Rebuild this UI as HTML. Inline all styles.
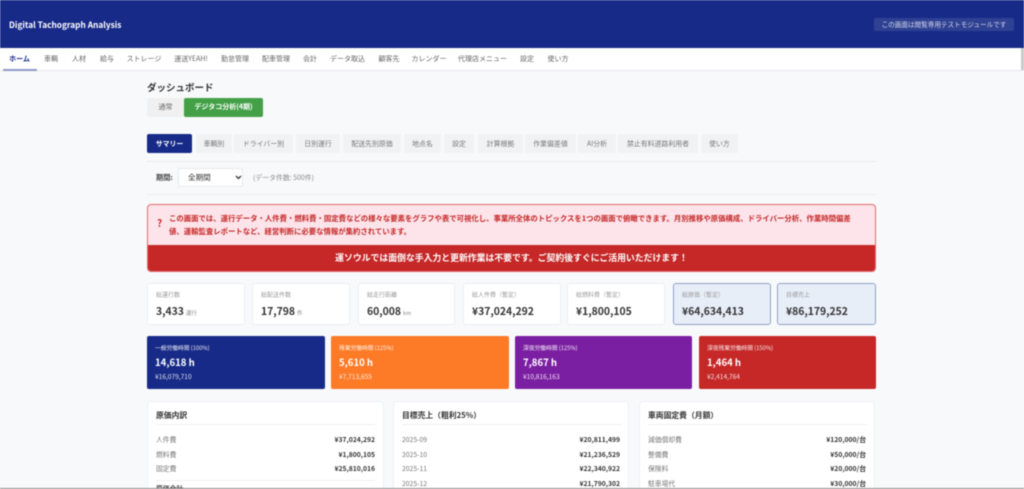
<!DOCTYPE html>
<html lang="ja"><head><meta charset="utf-8"><title>Digital Tachograph Analysis</title>
<style>
*{box-sizing:border-box;margin:0;padding:0}
html,body{width:1024px;height:489px;overflow:hidden;background:#f8f9fb}
body{font-family:"Noto Sans CJK JP","Liberation Sans",sans-serif;color:#333}
#w{position:relative;width:1024px;height:489px;overflow:hidden;filter:blur(.45px)}
#w div{position:absolute;white-space:nowrap}
.c{text-align:center}
.r{text-align:right}
.nav{top:48px;height:22px;line-height:22px;font-size:7px;color:#666;text-align:center}
.tab{top:134px;height:19px;line-height:19px;font-size:6.9px;color:#777;background:#f1f2f3;border-radius:2px;text-align:center}
.kpi{top:283px;height:42px;background:#fff;border:1px solid #eceef1;border-radius:3px}
.kpi.h{background:#e8eef8;border:1px solid #8fa3c8}
.kl{left:8px;top:5px;font-size:6px;line-height:11px;color:#9a9a9a}
.kv{left:8px;top:18px;font-size:10.4px;line-height:17px;font-weight:700;color:#333}
.kv span{font-size:5.5px;font-weight:400;color:#888;margin-left:2px}
.col{top:336px;height:53px;width:178px;border-radius:2px;color:#fff}
.cl{left:8px;top:7px;font-size:5.75px;line-height:10px;opacity:.9}
.cv{left:8px;top:17px;font-size:9.6px;line-height:18px;font-weight:700}
.cb{left:8px;top:35px;font-size:6.6px;line-height:11px;opacity:.85}
.p{top:401px;height:100px;background:#fff;border:1px solid #eef0f3;border-radius:4px}
.pt{top:8px;left:8px;font-size:7.8px;line-height:12px;font-weight:700;color:#333}
.pl{left:8px;height:1px;background:#eff0f2}
.k{left:8px;font-size:6.8px;line-height:11px;color:#777}
.v{right:8px;font-size:6.8px;line-height:11px;font-weight:700;color:#333}
</style></head><body><div id="w">
<div style="left:0;top:0;width:1024px;height:48px;background:#172a88"></div>
<div style="left:9px;top:18px;font-size:8.3px;line-height:14px;font-weight:700;color:#fff">Digital Tachograph Analysis</div>
<div class="c" style="left:874px;top:18px;width:140px;height:13px;line-height:13px;background:#2f4193;border-radius:2px;font-size:6.6px;color:#d5daec">この画面は閲覧専用テストモジュールです</div>

<div style="left:0;top:48px;width:1024px;height:23px;background:#fff;border-bottom:1px solid #e6e8eb"></div>
<div style="left:1021px;top:48px;width:3px;height:22px;background:#c9c9c9"></div>
<div style="left:3px;top:69px;width:34px;height:2px;background:#8f97c6"></div>
<div class="nav" style="left:5px;width:29px;color:#172a88;font-weight:700">ホーム</div>
<div class="nav" style="left:39px;width:24px">車輌</div>
<div class="nav" style="left:67px;width:24px">人材</div>
<div class="nav" style="left:95px;width:24px">給与</div>
<div class="nav" style="left:124px;width:40px">ストレージ</div>
<div class="nav" style="left:171px;width:40px">運送YEAH!</div>
<div class="nav" style="left:218px;width:34px">勤怠管理</div>
<div class="nav" style="left:259px;width:34px">配車管理</div>
<div class="nav" style="left:298px;width:24px">会計</div>
<div class="nav" style="left:327px;width:41px">データ取込</div>
<div class="nav" style="left:374px;width:30px">顧客先</div>
<div class="nav" style="left:409px;width:40px">カレンダー</div>
<div class="nav" style="left:456px;width:53px">代理店メニュー</div>
<div class="nav" style="left:515px;width:24px">設定</div>
<div class="nav" style="left:543px;width:30px">使い方</div>

<div style="left:147px;top:79px;font-size:9.5px;line-height:16px;font-weight:700;color:#333">ダッシュボード</div>
<div class="c" style="left:147px;top:98px;width:37px;height:19px;line-height:19px;background:#f0f0f0;border-radius:2px 0 0 2px;font-size:7px;color:#666">通常</div>
<div class="c" style="left:184px;top:98px;width:79px;height:19px;line-height:19px;background:#43a047;border-radius:2px;font-size:7px;color:#fff;font-weight:700">デジタコ分析(4期)</div>

<div class="tab" style="left:147px;width:45px;background:#172a88;color:#fff;font-weight:700">サマリー</div>
<div class="tab" style="left:196px;width:36px">車輌別</div>
<div class="tab" style="left:234px;width:59px">ドライバー別</div>
<div class="tab" style="left:296px;width:44px">日別運行</div>
<div class="tab" style="left:343px;width:58px">配送先別原価</div>
<div class="tab" style="left:404px;width:37px">地点名</div>
<div class="tab" style="left:444px;width:30px">設定</div>
<div class="tab" style="left:478px;width:45px">計算根拠</div>
<div class="tab" style="left:525px;width:51px">作業偏差値</div>
<div class="tab" style="left:578px;width:38px">AI分析</div>
<div class="tab" style="left:618px;width:80px">禁止有料道路利用者</div>
<div class="tab" style="left:701px;width:37px">使い方</div>
<div style="left:147px;top:161px;width:729px;height:1px;background:#e9ebee"></div>

<div style="left:156px;top:172px;font-size:7.2px;line-height:12px;font-weight:700;color:#444">期間:</div>
<div style="left:178px;top:168px;width:65px;height:19px;background:#fff;border:1px solid #e8e9ec;border-radius:2px"></div>
<div style="left:188px;top:171px;font-size:7.6px;line-height:13px;color:#333">全期間</div>
<svg style="position:absolute;left:235px;top:175px" width="7" height="5" viewBox="0 0 7 5"><path d="M1 1l2.5 2.5L6 1" fill="none" stroke="#333" stroke-width="1.3"/></svg>
<div style="left:253px;top:172px;font-size:6.9px;line-height:11px;color:#8b8b8b">(データ件数: 500件)</div>
<div style="left:147px;top:194px;width:729px;height:1px;background:#eceef0"></div>

<div style="left:147px;top:204px;width:729px;height:68px;background:#fce4ea;border:1px solid #e26a6a;border-radius:4px;overflow:hidden">
<div style="left:-1px;top:40px;width:731px;height:28px;background:#c62828"></div>
</div>
<div style="left:157px;top:216px;font-size:10px;line-height:14px;font-weight:700;color:#c62828">?</div>
<div style="left:169px;top:212px;font-size:7.39px;line-height:13px;font-weight:700;color:#c62828">この画面では、運行データ・人件費・燃料費・固定費などの様々な要素をグラフや表で可視化し、事業所全体のトピックスを1つの画面で俯瞰できます。月別推移や原価構成、ドライバー分析、作業時間偏差</div>
<div style="left:169px;top:225px;font-size:7.39px;line-height:13px;font-weight:700;color:#c62828">値、運輸監査レポートなど、経営判断に必要な情報が集約されています。</div>
<div class="c" style="left:147px;top:251px;width:729px;font-size:8.85px;line-height:14px;font-weight:700;color:#fff">運ソウルでは面倒な手入力と更新作業は不要です。ご契約後すぐにご活用いただけます！</div>

<div class="kpi" style="left:147px;width:98px"><div class="kl">総運行数</div><div class="kv">3,433<span>運行</span></div></div>
<div class="kpi" style="left:252px;width:98px"><div class="kl">総配送件数</div><div class="kv">17,798<span>件</span></div></div>
<div class="kpi" style="left:358px;width:97px"><div class="kl">総走行距離</div><div class="kv">60,008<span>km</span></div></div>
<div class="kpi" style="left:463px;width:98px"><div class="kl">総人件費（暫定）</div><div class="kv">¥37,024,292</div></div>
<div class="kpi" style="left:567px;width:98px"><div class="kl">総燃料費（暫定）</div><div class="kv">¥1,800,105</div></div>
<div class="kpi h" style="left:673px;width:98px"><div class="kl">総原価（暫定）</div><div class="kv">¥64,634,413</div></div>
<div class="kpi h" style="left:777px;width:99px"><div class="kl">目標売上</div><div class="kv">¥86,179,252</div></div>

<div class="col" style="left:147px;background:#172a88"><div class="cl">一般労働時間 (100%)</div><div class="cv">14,618 h</div><div class="cb">¥16,079,710</div></div>
<div class="col" style="left:331px;background:#fd7a26"><div class="cl">残業労働時間 (125%)</div><div class="cv">5,610 h</div><div class="cb">¥7,713,655</div></div>
<div class="col" style="left:515px;width:177px;background:#7b1fa2"><div class="cl">深夜労働時間 (125%)</div><div class="cv">7,867 h</div><div class="cb">¥10,816,163</div></div>
<div class="col" style="left:699px;width:177px;background:#c62828"><div class="cl">深夜残業労働時間 (150%)</div><div class="cv">1,464 h</div><div class="cb">¥2,414,764</div></div>

<div class="p" style="left:147px;width:237px"><div class="pt">原価内訳</div><div class="pl" style="top:22px;width:219px"></div>
<div class="k" style="top:32px">人件費</div><div class="v" style="top:32px">¥37,024,292</div>
<div class="k" style="top:47px">燃料費</div><div class="v" style="top:47px">¥1,800,105</div>
<div class="k" style="top:61px">固定費</div><div class="v" style="top:61px">¥25,810,016</div>
<div class="pl" style="top:78px;width:219px"></div>
<div class="k" style="top:81px;font-weight:700;color:#444">原価合計</div></div>

<div class="p" style="left:393px;width:236px"><div class="pt">目標売上（粗利25%）</div><div class="pl" style="top:22px;width:219px"></div>
<div class="k" style="top:32px">2025-09</div><div class="v" style="top:32px">¥20,811,499</div>
<div class="k" style="top:47px">2025-10</div><div class="v" style="top:47px">¥21,236,529</div>
<div class="k" style="top:61px">2025-11</div><div class="v" style="top:61px">¥22,340,922</div>
<div class="k" style="top:76px">2025-12</div><div class="v" style="top:76px">¥21,790,302</div></div>

<div class="p" style="left:639px;width:236px"><div class="pt">車両固定費（月額）</div><div class="pl" style="top:22px;width:219px"></div>
<div class="k" style="top:32px">減価償却費</div><div class="v" style="top:32px">¥120,000/台</div>
<div class="k" style="top:47px">整備費</div><div class="v" style="top:47px">¥50,000/台</div>
<div class="k" style="top:61px">保険料</div><div class="v" style="top:61px">¥20,000/台</div>
<div class="k" style="top:76px">駐車場代</div><div class="v" style="top:76px">¥30,000/台</div></div>

<div style="left:0;top:488px;width:1024px;height:1px;background:#8a8a8a"></div>
</div></body></html>
